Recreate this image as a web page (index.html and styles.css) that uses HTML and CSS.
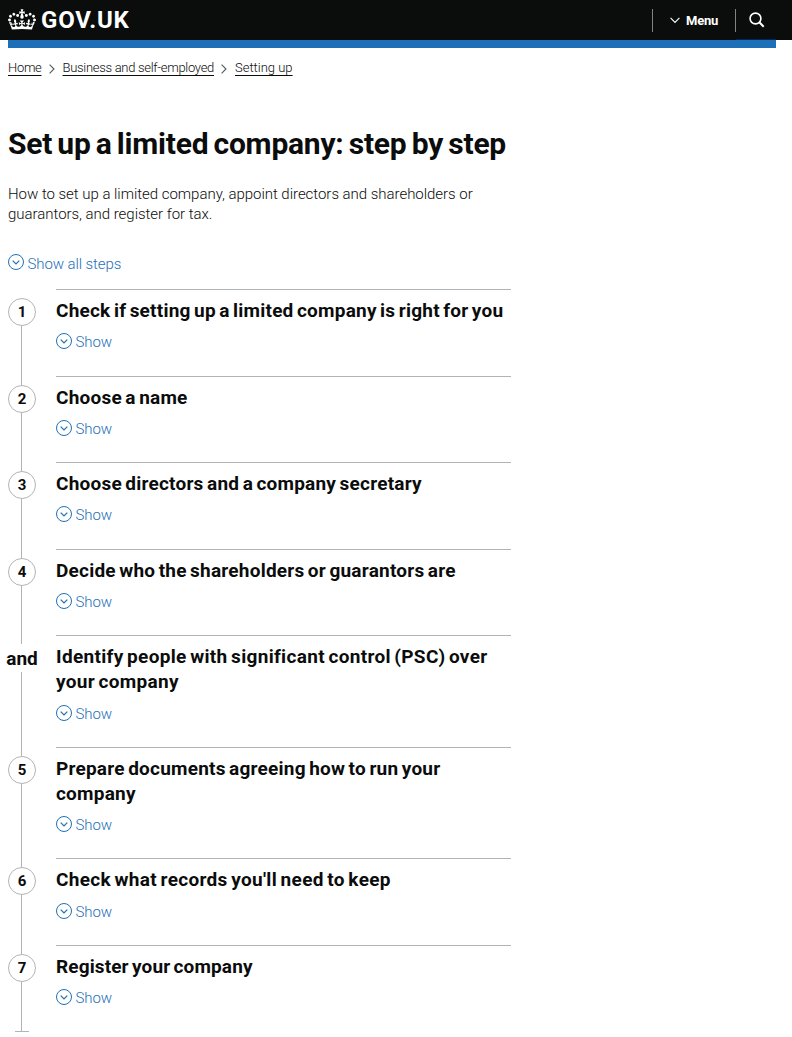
FILE: index.html
```html
<!DOCTYPE html>
<html lang="en">
<head>
    <meta charset="UTF-8">
    <meta name="viewport" content="width=device-width, initial-scale=1.0">
    <title>Set up a limited company: step by step - GOV.UK</title>
    <link rel="stylesheet" href="styles.css">
</head>
<body>
<svg width="0" height="0" class="sprite">
    <symbol id="chevron" viewBox="0 0 16 16">
        <circle cx="8" cy="8" r="7.5" fill="none" stroke="currentColor" stroke-width="1"/>
        <path d="M4.7 6.7L8 10l3.3-3.3" fill="none" stroke="currentColor" stroke-width="1.2"/>
    </symbol>
    <symbol id="arrow" viewBox="0 0 6 10">
        <path d="M.6.6L5 5 .6 9.4" fill="none" stroke="#505a5f" stroke-width="1.1"/>
    </symbol>
</svg>

<header class="header">
    <a href="#" class="logo">
        <svg class="crown" viewBox="0 0 132 97" width="28" height="21" fill="#fff">
            <path d="M25 30.2c3.5 1.5 7.7-.2 9.1-3.7 1.5-3.6-.2-7.8-3.9-9.2-3.6-1.4-7.6.3-9.1 3.9-1.4 3.5.3 7.5 3.9 9zM9 39.5c3.6 1.5 7.8-.2 9.2-3.7 1.5-3.6-.2-7.8-3.9-9.1-3.6-1.5-7.6.2-9.1 3.8-1.4 3.5.3 7.5 3.8 9zM4.4 57.2c3.5 1.5 7.7-.2 9.1-3.8 1.5-3.6-.2-7.7-3.9-9.1-3.5-1.5-7.6.3-9.1 3.8-1.4 3.5.3 7.6 3.9 9.1zm38.3-21.4c3.5 1.5 7.7-.2 9.1-3.8 1.5-3.6-.2-7.7-3.9-9.1-3.6-1.5-7.6.3-9.1 3.8-1.3 3.6.4 7.7 3.9 9.1zm64.4-5.6c-3.6 1.5-7.8-.2-9.1-3.7-1.5-3.6.2-7.8 3.8-9.2 3.6-1.4 7.7.3 9.2 3.9 1.3 3.5-.4 7.5-3.9 9zm15.9 9.3c-3.6 1.5-7.7-.2-9.1-3.7-1.5-3.6.2-7.8 3.7-9.1 3.6-1.5 7.7.2 9.2 3.8 1.5 3.5-.3 7.5-3.8 9zm4.7 17.7c-3.6 1.5-7.8-.2-9.2-3.8-1.5-3.6.2-7.7 3.9-9.1 3.6-1.5 7.7.3 9.2 3.8 1.3 3.5-.4 7.6-3.9 9.1zM89.3 35.8c-3.6 1.5-7.8-.2-9.2-3.8-1.4-3.6.2-7.7 3.9-9.1 3.6-1.5 7.7.3 9.2 3.8 1.4 3.6-.3 7.7-3.9 9.1zM69.7 17.7l8.9 4.7V9.3l-8.9 2.8c-.2-.3-.5-.6-.9-.9L72.4 0H59.6l3.5 11.2c-.3.3-.6.5-.9.9l-8.8-2.8v13.1l8.8-4.7c.3.3.6.7.9.9l-5 15.4v.1c-.2.8-.4 1.6-.4 2.4 0 4.1 3.1 7.5 7 8.1h.2c.3 0 .7.1 1 .1.4 0 .7 0 1-.1h.2c4-.6 7.1-4.1 7.1-8.1 0-.8-.1-1.7-.4-2.4V34l-5.1-15.4c.4-.2.7-.6 1-.9zM66 92.8c16.9 0 32.8 1.1 47.1 3.2 4-16.9 8.9-26.7 14-33.5l-9.6-3.4c1 4.9 1.1 7.2 0 10.2-1.5-1.4-3-4.3-4.2-8.7L108.6 76c2.8-2 5-3.2 7.5-3.3-4.4 9.4-10 11.9-13.6 11.2-4.3-.8-6.3-4.6-5.6-7.9 1-4.7 5.7-5.9 8-.5 4.3-8.7-3-11.4-7.6-8.8 7.1-7.2 7.9-13.5 2.1-21.1-8 6.1-8.1 12.3-4.5 20.8-4.7-5.4-12.1-2.5-9.5 6.2 3.4-5.2 7.9-2 7.2 3.1-.6 4.3-6.4 7.8-13.5 7.2-10.3-.9-10.9-8-11.2-13.8 2.5-.5 7.1 1.8 11 7.3L80.2 60c-4.1 4.4-8 5.3-12.3 5.4 1.4-4.4 8-11.6 8-11.6H55.5s6.4 7.2 7.9 11.6c-4.2-.1-8-1-12.3-5.4l1.4 16.4c3.9-5.5 8.5-7.7 10.9-7.3-.3 5.8-.9 12.8-11.1 13.8-7.2.6-12.9-2.9-13.5-7.2-.7-5 3.8-8.3 7.1-3.1 2.7-8.7-4.6-11.6-9.4-6.2 3.7-8.5 3.6-14.7-4.6-20.8-5.8 7.6-5 13.9 2.2 21.1-4.7-2.6-11.9.1-7.7 8.8 2.3-5.5 7.1-4.2 8.1.5.7 3.3-1.3 7.1-5.7 7.9-3.5.7-9-1.8-13.5-11.2 2.5.1 4.7 1.3 7.5 3.3l-4.7-15.4c-1.2 4.4-2.7 7.2-4.3 8.7-1.1-3-.9-5.3 0-10.2l-9.5 3.4c5 6.9 9.9 16.7 14 33.5 14.8-2.1 30.8-3.2 47.7-3.2z"/>
        </svg>
        <span class="logo-text">GOV.UK</span>
    </a>
    <nav class="header-nav">
        <button class="menu-btn">
            <svg width="10" height="7" viewBox="0 0 10 7"><path d="M.6.8L5 5.4 9.4.8" fill="none" stroke="#fff" stroke-width="1.1"/></svg>
            <span>Menu</span>
        </button>
        <button class="search-btn" aria-label="Search">
            <svg width="16" height="16" viewBox="0 0 16 16" fill="none" stroke="#fff"><circle cx="6.5" cy="6.5" r="5.4" stroke-width="1.6"/><path d="M10.3 10.3l4.4 4.4" stroke-width="2"/></svg>
        </button>
    </nav>
</header>
<div class="blue-bar"></div>

<nav class="breadcrumbs">
    <a href="#">Home</a>
    <svg width="6" height="10"><use href="#arrow"/></svg>
    <a href="#">Business and self-employed</a>
    <svg width="6" height="10"><use href="#arrow"/></svg>
    <a href="#" class="current">Setting up</a>
</nav>

<main class="content">
    <h1>Set up a limited company: step by step</h1>
    <p class="intro">How to set up a limited company, appoint directors and shareholders or guarantors, and register for tax.</p>

    <button class="show-btn show-all"><svg><use href="#chevron"/></svg><span>Show all steps</span></button>

    <ol class="steps">
        <li class="step">
            <div class="marker"><span class="circle">1</span></div>
            <div class="step-body">
                <h2>Check if setting up a limited company is right for you</h2>
                <button class="show-btn"><svg><use href="#chevron"/></svg><span>Show</span></button>
            </div>
        </li>
        <li class="step">
            <div class="marker"><span class="circle">2</span></div>
            <div class="step-body">
                <h2>Choose a name</h2>
                <button class="show-btn"><svg><use href="#chevron"/></svg><span>Show</span></button>
            </div>
        </li>
        <li class="step">
            <div class="marker"><span class="circle">3</span></div>
            <div class="step-body">
                <h2>Choose directors and a company secretary</h2>
                <button class="show-btn"><svg><use href="#chevron"/></svg><span>Show</span></button>
            </div>
        </li>
        <li class="step">
            <div class="marker"><span class="circle">4</span></div>
            <div class="step-body">
                <h2>Decide who the shareholders or guarantors are</h2>
                <button class="show-btn"><svg><use href="#chevron"/></svg><span>Show</span></button>
            </div>
        </li>
        <li class="step">
            <div class="marker"><span class="circle logic">and</span></div>
            <div class="step-body">
                <h2 class="wide">Identify people with significant control (PSC) over<br>your company</h2>
                <button class="show-btn"><svg><use href="#chevron"/></svg><span>Show</span></button>
            </div>
        </li>
        <li class="step">
            <div class="marker"><span class="circle">5</span></div>
            <div class="step-body">
                <h2>Prepare documents agreeing how to run your<br>company</h2>
                <button class="show-btn"><svg><use href="#chevron"/></svg><span>Show</span></button>
            </div>
        </li>
        <li class="step">
            <div class="marker"><span class="circle">6</span></div>
            <div class="step-body">
                <h2 class="wide">Check what records you'll need to keep</h2>
                <button class="show-btn"><svg><use href="#chevron"/></svg><span>Show</span></button>
            </div>
        </li>
        <li class="step">
            <div class="marker"><span class="circle">7</span></div>
            <div class="step-body">
                <h2 class="narrow">Register your company</h2>
                <button class="show-btn"><svg><use href="#chevron"/></svg><span>Show</span></button>
            </div>
        </li>
    </ol>
    <div class="steps-end"></div>
</main>
</body>
</html>
```
FILE: styles.css
```css
* {
    box-sizing: border-box;
}

body {
    margin: 0;
    font-family: Roboto, "Liberation Sans", sans-serif;
    color: #0b0c0c;
    background: #fff;
}

button {
    font-family: inherit;
    background: none;
    border: none;
    padding: 0;
    cursor: pointer;
}

.sprite {
    display: block;
}

.header {
    display: flex;
    justify-content: space-between;
    align-items: center;
    height: 40px;
    padding: 0 16px 0 8px;
    background: #0b0c0c;
}

.logo {
    display: flex;
    align-items: center;
    gap: 5px;
    color: #fff;
    text-decoration: none;
}

.crown {
    margin-bottom: 2px;
}

.logo-text {
    font-size: 24px;
    font-weight: 700;
    line-height: 40px;
    letter-spacing: 0.8px;
}

.header-nav {
    display: flex;
    height: 40px;
}

.menu-btn,
.search-btn {
    display: flex;
    align-items: center;
    height: 40px;
}

.menu-btn::before,
.search-btn::before {
    content: "";
    width: 1px;
    height: 23px;
    background: #808283;
}

.menu-btn {
    width: 83px;
    color: #fff;
    font-size: 13px;
    font-weight: 700;
}

.menu-btn svg {
    margin: 1px 6.5px 0 16.5px;
}

.menu-btn span {
    letter-spacing: -0.2px;
}

.search-btn {
    width: 41px;
    background: linear-gradient(#00285c, #00285c) 1px 39px / 40px 1px no-repeat;
}

.search-btn svg {
    margin-left: 13px;
}

.blue-bar {
    height: 8px;
    margin: 0 16px 0 8px;
    background: #1d70b8;
}

.breadcrumbs {
    display: flex;
    align-items: center;
    gap: 7.5px;
    height: 16px;
    margin: 13px 8px 0;
    font-size: 13px;
    font-weight: 300;
    line-height: 14px;
    letter-spacing: -0.3px;
}

.breadcrumbs a {
    margin-top: -2px;
    color: #0b0c0c;
    text-underline-offset: 3px;
    text-decoration-thickness: 1px;
}

.breadcrumbs .current {
    letter-spacing: 0;
}

.content {
    width: 503px;
    margin-left: 8px;
}

h1 {
    margin: 49px 0 0;
    font-size: 30px;
    font-weight: 700;
    line-height: 36px;
    letter-spacing: -0.23px;
    word-spacing: -2px;
    white-space: nowrap;
}

.intro {
    margin: 22px 0 0;
    font-size: 15px;
    font-weight: 300;
    line-height: 20px;
    letter-spacing: -0.03px;
}

.show-btn {
    display: flex;
    align-items: center;
    gap: 3.5px;
    height: 20px;
    color: #1d70b8;
    font-size: 15px;
    font-weight: 300;
    letter-spacing: -0.1px;
}

.show-btn svg {
    width: 16px;
    height: 16px;
    margin-bottom: 2px;
}

.show-all {
    margin-top: 30px;
}

.show-all svg {
    margin-bottom: 4px;
}

.steps {
    list-style: none;
    margin: 15px 0 0;
    padding: 0;
}

.step {
    display: grid;
    grid-template-columns: 28px 1fr;
    column-gap: 20px;
}

.marker {
    display: flex;
    flex-direction: column;
}

/* connecting line above and below each number */
.marker::before,
.marker::after {
    content: "";
    width: 1px;
    margin-left: 13px;
    background: #b1b4b6;
}

.marker::before {
    height: 9px;
}

.marker::after {
    flex: 1;
}

.step:first-child .marker::before {
    background: none;
}

.circle {
    display: flex;
    justify-content: center;
    align-items: center;
    width: 28px;
    height: 28px;
    border: 1px solid #b1b4b6;
    border-radius: 50%;
    font-size: 15px;
    font-weight: 700;
}

.logic {
    border-color: transparent;
    font-size: 19px;
}

.step-body {
    padding: 8px 0 23.15px;
    border-top: 1px solid #b1b4b6;
}

h2 {
    margin: 0 0 9.4px;
    font-size: 19px;
    font-weight: 700;
    line-height: 25px;
    letter-spacing: 0.22px;
    word-spacing: -1.5px;
    white-space: nowrap;
}

h2.wide {
    letter-spacing: 0.32px;
}

h2.narrow {
    letter-spacing: 0.12px;
}

.steps-end {
    width: 14px;
    height: 1px;
    margin-left: 7px;
    background: #b1b4b6;
}
```
